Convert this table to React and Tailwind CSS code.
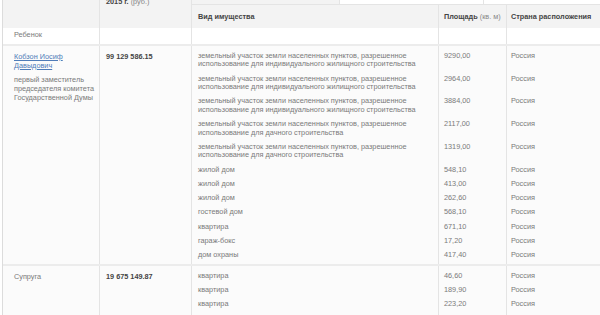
import React from 'react';

const LAND_IZHS = 'земельный участок земли населенных пунктов, разрешенное использование для индивидуального жилищного строительства';
const LAND_DACHA = 'земельный участок земли населенных пунктов, разрешенное использование для дачного строительства';

const people = [
  {
    name: 'Ребенок',
    plain: true,
    income: '',
    top: 'pt-[1.5px]',
    items: [{ kind: '', area: '', country: '' }]
  },
  {
    name: 'Кобзон Иосиф Давыдович',
    position: 'первый заместитель председателя комитета Государственной Думы',
    income: '99 129 586.15',
    top: 'pt-[5.75px]',
    items: [
      { kind: LAND_IZHS, area: '9290,00', country: 'Россия' },
      { kind: LAND_IZHS, area: '2964,00', country: 'Россия' },
      { kind: LAND_IZHS, area: '3884,00', country: 'Россия' },
      { kind: LAND_DACHA, area: '2117,00', country: 'Россия' },
      { kind: LAND_DACHA, area: '1319,00', country: 'Россия' },
      { kind: 'жилой дом', area: '548,10', country: 'Россия' },
      { kind: 'жилой дом', area: '413,00', country: 'Россия' },
      { kind: 'жилой дом', area: '262,60', country: 'Россия' },
      { kind: 'гостевой дом', area: '568,10', country: 'Россия' },
      { kind: 'квартира', area: '671,10', country: 'Россия' },
      { kind: 'гараж-бокс', area: '17,20', country: 'Россия' },
      { kind: 'дом охраны', area: '417,40', country: 'Россия' }
    ]
  },
  {
    name: 'Супруга',
    plain: true,
    income: '19 675 149.87',
    top: 'pt-[6px]',
    open: true,
    items: [
      { kind: 'квартира', area: '46,60', country: 'Россия' },
      { kind: 'квартира', area: '189,90', country: 'Россия' },
      { kind: 'квартира', area: '223,20', country: 'Россия' }
    ]
  }
];

const PersonRow = ({ person, bg }) => {
  const last = person.items.length - 1;
  const pad = (i) => `${i === 0 ? person.top : 'pt-[5.75px]'} ${i === last ? 'pb-[12px]' : ''}`;
  return (
    <div className={`flex ${person.open ? '' : 'border-b-2 border-[#ececec]'} ${bg}`}>
      <div className={`w-[97px] shrink-0 border-r border-[#e4e4e4] pl-[11px] leading-[9px] ${person.top}`}>
        {person.plain ? (
          <p className="text-[#7a7a7a]">{person.name}</p>
        ) : (
          <>
            <p className="text-[#4f7cb8] underline w-[60px]">{person.name}</p>
            <p className="text-[#7a7a7a] mt-[5.5px]">{person.position}</p>
          </>
        )}
      </div>
      <div className={`w-[92px] shrink-0 border-r border-[#e4e4e4] pl-[6px] leading-[9px] font-bold text-[#444] ${person.top}`}>
        {person.income}
      </div>
      <div className="flex flex-col">
        {person.items.map((item, i) => (
          <div key={i} className="flex leading-[8.5px] text-[#7a7a7a]">
            <div className={`w-[247px] shrink-0 border-r border-[#e4e4e4] pl-[6px] ${i === 0 ? person.top : 'pt-[5.75px]'} ${i === last ? (person.open ? 'pb-[12px]' : 'pb-[4px]') : ''} ${person.plain && !item.kind ? 'h-[16px]' : ''}`}>
              {item.kind}
            </div>
            <div className={`w-[68px] shrink-0 border-r border-[#e4e4e4] pl-[5px] ${i === 0 ? person.top : 'pt-[5.75px]'} ${i === last ? (person.open ? 'pb-[12px]' : 'pb-[4px]') : ''}`}>
              {item.area}
            </div>
            <div className={`w-[120px] shrink-0 pl-[4px] ${i === 0 ? person.top : 'pt-[5.75px]'} ${i === last ? (person.open ? 'pb-[12px]' : 'pb-[4px]') : ''}`}>
              {item.country}
            </div>
          </div>
        ))}
      </div>
    </div>
  );
};

export default function App() {
  return (
    <div className="w-[600px] h-[315px] overflow-hidden bg-white font-['Liberation_Sans',Arial,sans-serif] text-[7.3px]">
      <div className="ml-[2px] border-l border-[#dcdcdc] w-[640px]">
        {/* Header */}
        <div className="flex h-[28px]">
          <div className="w-[97px] shrink-0 border-r border-[#e4e4e4] bg-[#f3f3f3]"></div>
          <div className="w-[92px] shrink-0 border-r border-[#e4e4e4] bg-[#f3f3f3] pl-[6px] overflow-hidden">
            <p className="-mt-[3px] leading-[9px]">
              <span className="font-bold text-[#444]">2015 г.</span>{' '}
              <span className="text-[#888]">(руб.)</span>
            </p>
          </div>
          <div className="flex flex-col">
            <div className="flex h-[5px] border-b border-[#e4e4e4]">
              <div className="w-[147px] shrink-0 bg-[#f3f3f3]"></div>
              <div className="w-[144px] shrink-0 bg-white border-l border-[#e4e4e4]"></div>
              <div className="w-[144px] shrink-0 bg-white border-l border-[#e4e4e4]"></div>
            </div>
            <div className="flex flex-1 bg-[#f3f3f3] leading-[9px]">
              <div className="w-[247px] shrink-0 border-r border-[#e4e4e4] pl-[6px] pt-[6.5px] font-bold text-[#444]">
                Вид имущества
              </div>
              <div className="w-[68px] shrink-0 border-r border-[#e4e4e4] pl-[5px] pt-[6.5px]">
                <span className="font-bold text-[#444]">Площадь</span>{' '}
                <span className="text-[#888]">(кв. м)</span>
              </div>
              <div className="w-[120px] shrink-0 pl-[4px] pt-[6.5px] font-bold text-[#444]">
                Страна расположения
              </div>
            </div>
          </div>
        </div>

        {/* Body */}
        {people.map((p, i) => (
          <PersonRow key={i} person={p} bg={i === 0 ? 'bg-white' : 'bg-[#fbfbfb]'} />
        ))}
      </div>
    </div>
  );
}
